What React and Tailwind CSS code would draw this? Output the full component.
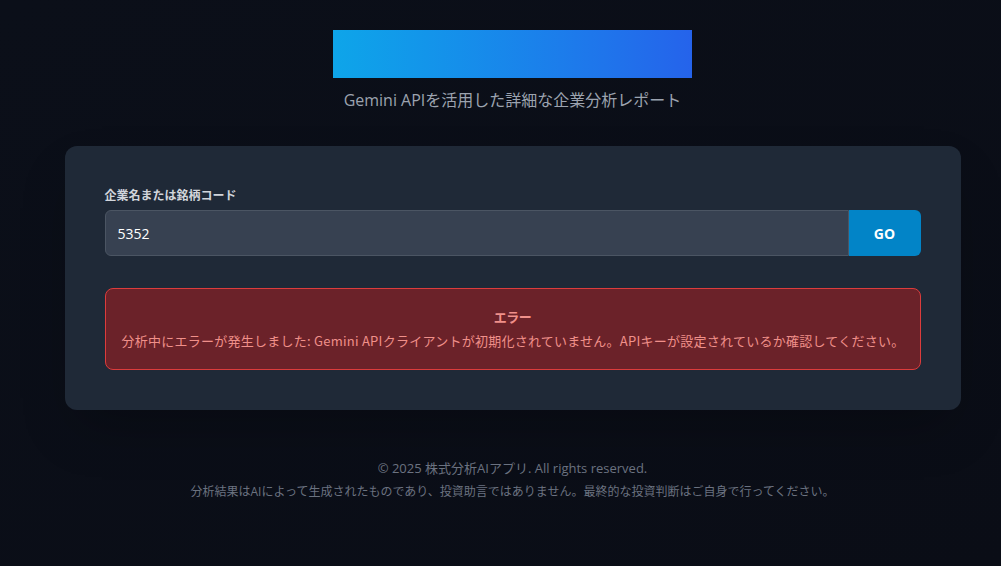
import React, { useState } from 'react';

const App = () => {
  const [query, setQuery] = useState('5352');

  return (
    <div
      className="min-h-screen bg-gradient-to-br from-[#0b0f19] to-[#0a0d16] pl-6 text-gray-200"
      style={{ fontFamily: '"Open Sans", "Noto Sans CJK JP", sans-serif' }}
    >
      <div className="mx-auto max-w-4xl pt-[30px] pb-12">
        {/* Header */}
        <header className="flex flex-col items-center">
          <div className="h-12 w-[359px] bg-gradient-to-r from-[#0ea5e9] to-[#2563eb]"></div>
          <p className="mt-2 text-[16px] leading-7 text-[#9ca3af]">Gemini APIを活用した詳細な企業分析レポート</p>
        </header>

        {/* Search Card */}
        <div className="mt-8 rounded-xl bg-[#1f2937] p-10 shadow-2xl">
          <label className="mb-1 block text-[12px] font-bold leading-5 text-[#d1d5db]">企業名または銘柄コード</label>
          <div className="flex">
            <input
              value={query}
              onChange={(e) => setQuery(e.target.value)}
              className="h-[46px] flex-1 rounded-l-md border border-[#4b5563] bg-[#374151] px-3 text-[14px] text-white outline-none"
            />
            <button className="h-[46px] w-[72px] rounded-r-md bg-[#0284c7] text-[14px] font-bold text-white">GO</button>
          </div>

          {/* Error */}
          <div className="mt-8 rounded-lg border border-[#dc3c3c] bg-[#6b2229] px-4 py-4 text-center text-[#f0908a]">
            <p className="text-[13px] font-bold leading-6 tracking-[-0.5px]">エラー</p>
            <p className="whitespace-nowrap text-[13px] leading-6 tracking-[0.25px]" style={{ fontFamily: '"Noto Sans CJK JP", sans-serif' }}>分析中にエラーが発生しました: Gemini APIクライアントが初期化されていません。APIキーが設定されているか確認してください。</p>
          </div>
        </div>

        {/* Footer */}
        <footer className="mt-12 text-center leading-5 text-[#6b7280]">
          <p className="text-[13px]">© 2025 株式分析AIアプリ. All rights reserved.</p>
          <p className="mt-1 text-[12px]">分析結果はAIによって生成されたものであり、投資助言ではありません。最終的な投資判断はご自身で行ってください。</p>
        </footer>
      </div>
    </div>
  );
};

export default App;
